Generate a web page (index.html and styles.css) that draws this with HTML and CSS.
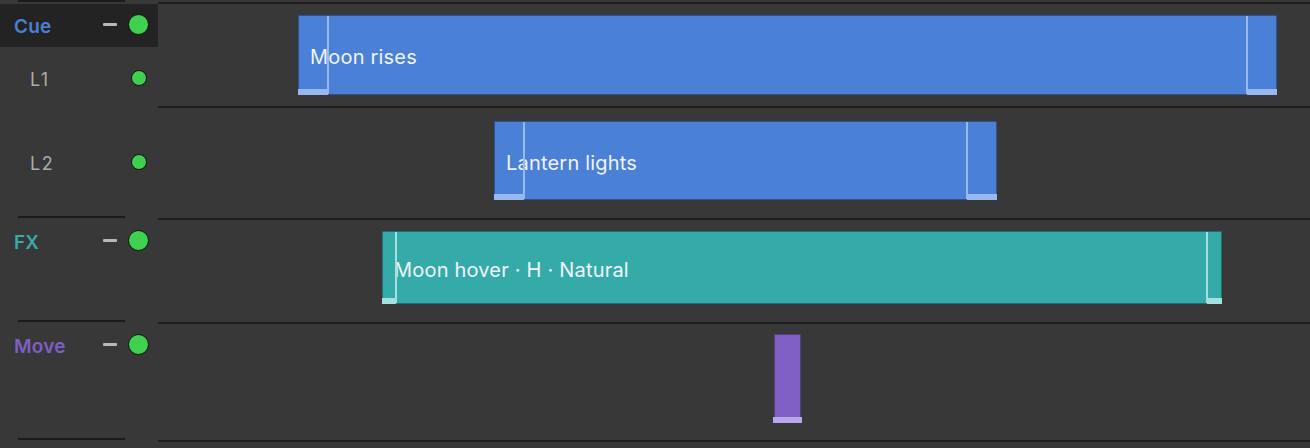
FILE: index.html
```html
<!DOCTYPE html>
<html lang="en">
<head>
    <meta charset="UTF-8">
    <title>Show timeline</title>
    <link rel="stylesheet" href="styles.css">
</head>
<body>
    <div class="app">
        <aside class="tracks">
            <div class="sep"></div>
            <section class="group">
                <div class="group-head selected">
                    <span class="group-name cue">Cue</span>
                    <span class="collapse"></span>
                    <span class="dot"></span>
                </div>
                <div class="lane lane-l1">
                    <span class="lane-name">L1</span>
                    <span class="dot small"></span>
                </div>
                <div class="lane lane-l2">
                    <span class="lane-name">L2</span>
                    <span class="dot small"></span>
                </div>
            </section>
            <div class="sep"></div>
            <section class="group group-fx">
                <div class="group-head">
                    <span class="group-name fx">FX</span>
                    <span class="collapse"></span>
                    <span class="dot"></span>
                </div>
            </section>
            <div class="sep"></div>
            <section class="group group-move">
                <div class="group-head">
                    <span class="group-name move">Move</span>
                    <span class="collapse"></span>
                    <span class="dot"></span>
                </div>
            </section>
            <div class="sep"></div>
        </aside>

        <main class="timeline">
            <div class="rule"></div>
            <div class="row row-cue">
                <div class="clip blue" style="left: 140px; top: 11px; width: 979px; height: 80px;">
                    <span class="handle start" style="width: 28px;"></span>
                    <span class="clip-label">Moon rises</span>
                    <span class="handle end" style="width: 28px;"></span>
                </div>
            </div>
            <div class="rule"></div>
            <div class="row row-l2">
                <div class="clip blue" style="left: 336px; top: 13px; width: 503px; height: 79px;">
                    <span class="handle start" style="width: 28px;"></span>
                    <span class="clip-label">Lantern lights</span>
                    <span class="handle end" style="width: 28px;"></span>
                </div>
            </div>
            <div class="rule"></div>
            <div class="row row-fx">
                <div class="clip teal" style="left: 224px; top: 11px; width: 840px; height: 73px;">
                    <span class="handle start" style="width: 12px;"></span>
                    <span class="clip-label">Moon hover · H · Natural</span>
                    <span class="handle end" style="width: 13px;"></span>
                </div>
            </div>
            <div class="rule"></div>
            <div class="row row-move">
                <div class="clip purple point" style="left: 616px; top: 10px; width: 27px; height: 89px;"></div>
            </div>
            <div class="rule"></div>
        </main>
    </div>
</body>
</html>
```

FILE: styles.css
```css
body {
    margin: 0;
    background-color: #383838;
    font-family: Inter, "Noto Sans", sans-serif;
    overflow: hidden;
}
.app {
    display: flex;
    height: 448px;
}

/* track list */
.tracks {
    width: 158px;
    flex-shrink: 0;
    display: flex;
    flex-direction: column;
}
.sep {
    height: 2px;
    margin: 0 33px 0 18px;
    background: #1b1b1b;
}
.group-head {
    display: flex;
    align-items: center;
    height: 44px;
    padding: 0 9px 0 14px;
}
.group-head.selected {
    margin-top: 2px;
    height: 40px;
    padding-bottom: 3px;
    background: #232323;
}
.group-name {
    flex: 1;
    margin-top: 5px;
    font-size: 19px;
    font-weight: 600;
    letter-spacing: 0.2px;
}
.cue { color: #4a7fd4; }
.fx { color: #35aaa8; }
.move { color: #7e5fc2; }
.collapse {
    width: 14px;
    height: 3px;
    margin-right: 11px;
    background: #b8b8b8;
    border-radius: 1px;
}
.dot {
    width: 19px;
    height: 19px;
    border-radius: 50%;
    background: #3fd04f;
    border: 1.5px solid #111;
}
.dot.small {
    width: 14px;
    height: 14px;
}
.lane {
    display: flex;
    align-items: center;
    padding: 0 11px 0 30px;
}
.lane-l1 { height: 61px; }
.lane-l2 { height: 108px; }
.lane-name {
    flex: 1;
    margin-top: 3px;
    font-size: 18px;
    letter-spacing: 1.5px;
    color: #ababab;
}
.group-fx { height: 102px; }
.group-move { height: 116px; }

/* timeline */
.timeline {
    flex: 1;
    padding-top: 2px;
}
.rule {
    height: 2px;
    background: #1f1f1f;
}
.row { position: relative; }
.row-cue { height: 102px; }
.row-l2 { height: 110px; }
.row-fx { height: 102px; }
.row-move { height: 116px; }

.clip {
    position: absolute;
    box-sizing: border-box;
    display: flex;
    align-items: center;
    border: 1px solid rgba(0, 0, 0, 0.35);
    border-radius: 1px;
}
.clip.blue { background: #4a80d6; --light: #97b8f0; }
.clip.teal { background: #35aba9; --light: #a6e0de; }
.clip.purple { background: #8160c5; --light: #bba6ec; }

.handle {
    align-self: stretch;
    position: relative;
    flex-shrink: 0;
}
.handle.start { border-right: 2px solid var(--light); }
.handle.end { border-left: 2px solid var(--light); margin-left: auto; }
.handle::after {
    content: "";
    position: absolute;
    bottom: -1px;
    left: -1px;
    right: -1px;
    height: 6px;
    background: var(--light);
}
.clip.point::after {
    content: "";
    position: absolute;
    bottom: -1px;
    left: -2px;
    right: -2px;
    height: 6px;
    background: var(--light);
}
.clip-label {
    margin-top: 4px;
    margin-left: -19px;
    font-size: 20px;
    letter-spacing: 0.2px;
    color: #f1f4fb;
    white-space: nowrap;
}
.clip.teal .clip-label { margin-left: -3px; }
```
